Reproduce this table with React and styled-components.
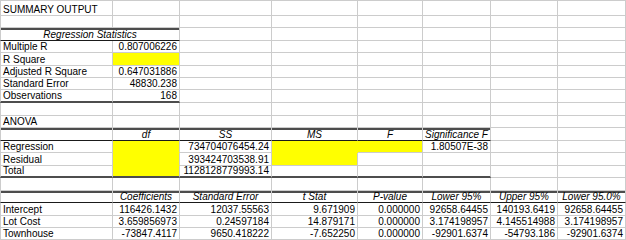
import styled, { createGlobalStyle } from 'styled-components';

const GlobalStyle = createGlobalStyle`
    html, body{
        margin: 0;
        padding: 0;
        background: #fff;
    }
`

const colWidths = [113, 67, 92, 86, 65, 68, 67, 68];
const rowHeights = [16, 12, 13, 12, 13, 12, 12, 13, 13, 12, 13, 12, 13, 12, 13, 12, 13, 12, 12];

const GRID = '#cccccc';
const RULE = '#4d4d4d';
const YELLOW = '#ffff00';

const SheetStyled = styled.div`
    display: grid;
    grid-template-columns: ${colWidths.map(w => w + 'px').join(' ')};
    grid-template-rows: ${rowHeights.map(h => h + 'px').join(' ')};
    width: 626px;
    height: 240px;
    overflow: hidden;
    font-family: "Liberation Sans", Arial, sans-serif;
    font-size: 10px;
    color: #000;
`

const Cell = styled.div`
    grid-column: span ${props => props.$span || 1};
    box-sizing: border-box;
    display: flex;
    align-items: flex-end;
    justify-content: ${props => props.$align === 'right' ? 'flex-end' : props.$align === 'center' ? 'center' : 'flex-start'};
    padding: 0 2px 0 2px;
    line-height: 11px;
    font-style: ${props => props.$italic ? 'italic' : 'normal'};
    white-space: nowrap;
    background: ${props => props.$fill ? YELLOW : '#fff'};
    border-left: ${props => props.$first ? `1px solid ${GRID}` : 'none'};
    border-top: ${props => props.$firstRow ? `1px solid ${GRID}` : 'none'};
    border-right: 1px solid ${props => props.$joinRight ? YELLOW : GRID};
    border-bottom: ${props => props.$rule === 'thick' ? `2px solid ${RULE}`
        : props.$rule === 'thin' ? '1px solid #1a1a1a'
        : `1px solid ${props.$joinDown ? YELLOW : GRID}`};
    box-shadow: ${props => props.$topRule ? `inset 0 2px 0 ${RULE}` : 'none'};
    span{
        display: block;
        height: 11px;
        line-height: 11px;
        margin-bottom: 0;
    }
`

const L = t => ({ t });
const R = t => ({ t, a: 'right' });
const H = t => ({ t, a: 'center', i: true });
const Y = { y: true };

const rows = [
    { cells: [L('SUMMARY OUTPUT')] },
    { cells: [] },
    { cells: [{ t: 'Regression Statistics', a: 'center', i: true, span: 2 }], top: 2, bottom: 2, rule: 'thin' },
    { cells: [L('Multiple R'), R('0.807006226')] },
    { cells: [L('R Square'), Y] },
    { cells: [L('Adjusted R Square'), R('0.647031886')] },
    { cells: [L('Standard Error'), R('48830.238')] },
    { cells: [L('Observations'), R('168')], bottom: 2, rule: 'thick' },
    { cells: [] },
    { cells: [L('ANOVA')] },
    { cells: [L(''), H('df'), H('SS'), H('MS'), H('F'), H('Significance F')], top: 6, bottom: 6, rule: 'thin' },
    { cells: [L('Regression'), Y, R('734704076454.24'), Y, Y, R('1.80507E-38')] },
    { cells: [L('Residual'), Y, R('393424703538.91'), Y] },
    { cells: [L('Total'), Y, R('1128128779993.14')], bottom: 6, rule: 'thick' },
    { cells: [] },
    { cells: [L(''), H('Coefficients'), H('Standard Error'), H('t Stat'), H('P-value'), H('Lower 95%'), H('Upper 95%'), H('Lower 95.0%')], top: 8, bottom: 8, rule: 'thin' },
    { cells: ['Intercept', '116426.1432', '12037.55563', '9.671909', '0.000000', '92658.64455', '140193.6419', '92658.64455'].map((v, i) => i ? R(v) : L(v)) },
    { cells: ['Lot Cost', '3.659856973', '0.24597184', '14.879171', '0.000000', '3.174198957', '4.145514988', '3.174198957'].map((v, i) => i ? R(v) : L(v)) },
    { cells: ['Townhouse', '-73847.4117', '9650.418222', '-7.652250', '0.000000', '-92901.6374', '-54793.186', '-92901.6374'].map((v, i) => i ? R(v) : L(v)) },
];

const isYellow = (r, c) => !!(rows[r] && rows[r].cells[c] && rows[r].cells[c].y);

function Sheet(){
    const out = [];
    rows.forEach((row, r) => {
        let c = 0;
        while(c < colWidths.length){
            const cell = row.cells[c] || {};
            const span = cell.span || 1;
            const last = c + span;
            out.push(
                <Cell
                    key={`${r}-${c}`}
                    $span={span}
                    $align={cell.a}
                    $italic={cell.i}
                    $fill={cell.y}
                    $first={c === 0}
                    $firstRow={r === 0}
                    $joinRight={cell.y && isYellow(r, last)}
                    $joinDown={cell.y && isYellow(r + 1, c)}
                    $topRule={row.top && c < row.top}
                    $rule={row.bottom && c < row.bottom ? row.rule : null}
                >
                    {cell.t ? <span>{cell.t}</span> : null}
                </Cell>
            );
            c = last;
        }
    });
    return <SheetStyled>{out}</SheetStyled>
}

export default function App(){
    return(
        <>
            <GlobalStyle />
            <Sheet />
        </>
    )
}
